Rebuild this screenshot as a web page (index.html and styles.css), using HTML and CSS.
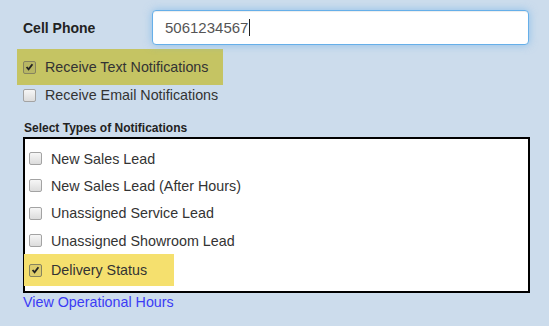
FILE: index.html
```html
<!DOCTYPE html>
<html lang="en">
<head>
  <meta charset="UTF-8">
  <title>Notification Settings</title>
  <link rel="stylesheet" href="styles.css">
</head>
<body>
  <div class="form">
    <!-- Phone -->
    <div class="phone-row">
      <label class="phone-label">Cell Phone</label>
      <div class="phone-input">5061234567<span class="caret"></span></div>
    </div>

    <!-- Channels -->
    <div class="opt channel hl-olive">
      <span class="box checked"><svg viewBox="0 0 12 12" width="12" height="12"><path d="M2.8 6 L5 8.6 L9.2 3" fill="none" stroke="#222" stroke-width="2"/></svg></span>
      <span>Receive Text Notifications</span>
    </div>
    <div class="opt channel email">
      <span class="box"></span>
      <span>Receive Email Notifications</span>
    </div>

    <!-- Types -->
    <div class="section-label">Select Types of Notifications</div>
    <div class="types">
      <div class="opt type"><span class="box"></span><span>New Sales Lead</span></div>
      <div class="opt type"><span class="box"></span><span>New Sales Lead (After Hours)</span></div>
      <div class="opt type"><span class="box"></span><span>Unassigned Service Lead</span></div>
      <div class="opt type"><span class="box"></span><span>Unassigned Showroom Lead</span></div>
      <div class="opt type hl-yellow">
        <span class="box checked"><svg viewBox="0 0 12 12" width="12" height="12"><path d="M2.8 6 L5 8.6 L9.2 3" fill="none" stroke="#222" stroke-width="2"/></svg></span>
        <span>Delivery Status</span>
      </div>
    </div>

    <a href="#" class="hours-link">View Operational Hours</a>
  </div>
</body>
</html>
```

FILE: styles.css
```css
* {
  margin: 0;
  padding: 0;
  box-sizing: border-box;
}

body {
  font-family: "Liberation Sans", Arial, sans-serif;
  background: #ccdcec;
  color: #333;
  font-size: 14.3px;
}

.form {
  padding: 10px 0 0 23px;
  width: 530px;
}

/* Phone row */
.phone-row {
  display: flex;
  align-items: center;
  height: 35px;
}

.phone-label {
  width: 129px;
  font-weight: bold;
  font-size: 14px;
  color: #222;
}

.phone-input {
  width: 377px;
  height: 35px;
  padding-left: 12px;
  display: flex;
  align-items: center;
  background: #fff;
  border: 1px solid #66afe9;
  border-radius: 4px;
  box-shadow: 0 0 8px rgba(102, 175, 233, 0.6), inset 0 1px 1px rgba(0, 0, 0, 0.075);
  font-size: 15px;
  color: #555;
}

.caret {
  display: inline-block;
  width: 1px;
  height: 17px;
  background: #222;
  margin-left: 1px;
}

/* Checkbox rows */
.opt {
  display: flex;
  align-items: center;
  gap: 9px;
}

.box {
  width: 13px;
  height: 13px;
  border: 1px solid #a3a3a3;
  border-radius: 2px;
  background: linear-gradient(#f6f6f6, #dcdcdc);
  display: flex;
  align-items: center;
  justify-content: center;
  flex: none;
}

.box.checked {
  background: rgba(120, 120, 100, 0.18);
  border-color: #86835e;
}

.channel {
  padding-left: 6px;
}

.hl-olive {
  margin: 4px 0 0 -6px;
  width: 206px;
  height: 36px;
  background: #c5c463;
}

.email {
  margin-left: -6px;
  height: 20px;
}

.section-label {
  margin-top: 16px;
  margin-bottom: 2px;
  font-size: 12px;
  font-weight: bold;
  color: #222;
  line-height: 14px;
  padding-left: 1px;
}

/* Types box */
.types {
  width: 507px;
  background: #fff;
  border: 2px solid #000;
  padding: 6px 0 5px 0;
}

.type {
  height: 27.3px;
  padding-left: 4px;
}

.hl-yellow {
  width: 150px;
  height: 32px;
  margin-left: -1px;
  padding-left: 5px;
  background: #f5e06e;
}

.hours-link {
  display: block;
  color: #3b3bf5;
  text-decoration: none;
  line-height: 18px;
}
```
